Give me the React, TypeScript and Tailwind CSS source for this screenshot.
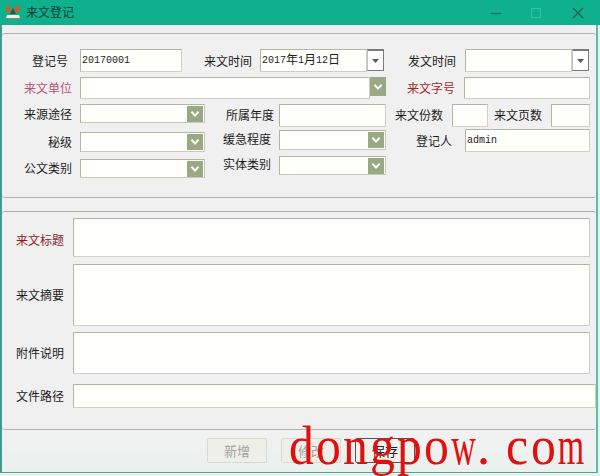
import React from "react";

const cjk = { fontFamily: '"Noto Sans CJK SC", "Liberation Sans", sans-serif' };
const mono = { fontFamily: '"Liberation Mono", "Noto Sans CJK SC", monospace' };

function Label({ text, w, h, color = "text-[#1c1c1c]", className = "" }: { text: string; w: string; h?: string; color?: string; className?: string }) {
  return (
    <div style={cjk} className={`${w} ${h ?? ""} ${color} ${className} shrink-0 flex items-center justify-end text-[12px] leading-none`}>
      {text}
    </div>
  );
}

function Input({ className = "", children }: { className?: string; children?: React.ReactNode }) {
  return (
    <div style={mono} className={`${className} shrink-0 bg-[#fffffb] border border-[#cfcfc2] border-t-[#b4b4a4] border-l-[#b4b4a4] rounded-[1px] flex items-center pl-[1px] text-[10px] text-[#1c1c1c] leading-none whitespace-nowrap`}>
      {children}
    </div>
  );
}

function Combo({ className = "" }: { className?: string }) {
  return (
    <div className={`${className} shrink-0 bg-[#fffffb] border border-[#c9c9bb] border-t-[#b4b4a4] border-l-[#b4b4a4] flex justify-end items-center pr-[1px]`}>
      <Chevron className="w-[16px] h-[16px]" />
    </div>
  );
}

function Chevron({ className = "" }: { className?: string }) {
  return (
    <div className={`${className} bg-[#9aa983] flex items-center justify-center shrink-0`}>
      <svg width="10" height="8" viewBox="0 0 10 8">
        <path d="M1.5 1.8 L5 5.6 L8.5 1.8" fill="none" stroke="#ffffff" strokeWidth="2" />
      </svg>
    </div>
  );
}

function DropBtn() {
  return (
    <div className="w-[17px] h-[22px] shrink-0 bg-white border-t-2 border-r border-b border-[#7a7a7a] border-l border-l-[#c0c0c0] flex items-center justify-center">
      <svg width="7" height="4" viewBox="0 0 7 4">
        <path d="M0 0 H7 L3.5 4 Z" fill="#5a5a5a" />
      </svg>
    </div>
  );
}

function Button({ text, active = false }: { text: string; active?: boolean }) {
  return (
    <div
      style={cjk}
      className={`w-[60px] h-[25px] rounded-[2px] flex items-center justify-center text-[13px] leading-none border ${
        active ? "border-[#555555] bg-[#f3f1ec] text-[#222222]" : "border-[#d9d9d2] bg-[#efefe9] text-[#a3a39c]"
      }`}
    >
      {text}
    </div>
  );
}

function Glyph({ c, wide = false }: { c: string; wide?: boolean }) {
  return (
    <span className="w-[27px] flex justify-center">
      <span className={wide ? "inline-block scale-x-[0.63]" : "inline-block scale-x-[0.92]"}>{c}</span>
    </span>
  );
}

export default function App() {
  return (
    <div className="relative w-[600px] h-[476px] bg-[#e6f3ef] overflow-hidden flex flex-col">
      <div className="h-[25px] shrink-0 flex items-center bg-[#0fb08e]">
        <svg width="16" height="16" viewBox="0 0 16 16" className="ml-[5px]">
          <rect x="1" y="1" width="5" height="6" fill="#b5683a" />
          <rect x="10" y="1" width="5" height="6" fill="#b5683a" />
          <path d="M8 3 L5 9 H11 Z" fill="#3d4f3d" />
          <path d="M2 10 H14 L15 13 H1 Z" fill="#f2efe0" />
          <rect x="1" y="13" width="14" height="1.5" fill="#6f8f7a" />
        </svg>
        <span style={cjk} className="ml-[5px] mb-[1px] text-[12px] leading-none text-[#0d3f36]">来文登记</span>
        <div className="ml-auto flex items-center">
          <svg width="12" height="12" viewBox="0 0 12 12" className="mr-[29px]">
            <path d="M1 6.5 H11" stroke="#2d6f60" strokeWidth="1.4" />
          </svg>
          <svg width="10" height="10" viewBox="0 0 10 10" className="mr-[31px]">
            <rect x="0.5" y="0.5" width="9" height="9" fill="none" stroke="#35bfa3" />
          </svg>
          <svg width="12" height="12" viewBox="0 0 12 12" className="mr-[16px]">
            <path d="M1 1 L11 11 M11 1 L1 11" stroke="#1f5f52" strokeWidth="1.4" />
          </svg>
        </div>
      </div>

      <div className="w-[598px] h-[448px] shrink-0 flex flex-col bg-[#f0f0f0] border-l-2 border-r-2 border-b border-l-[#3f9d8a] border-r-[#5fbcaa] border-b-[#5f9d90]">
        <div className="h-[8px] shrink-0" />
        <div className="h-[165px] shrink-0 border-t border-b border-[#b0b0ac] rounded-[3px] pt-[15px] pl-[1px]">
          <div className="flex h-[23px] items-start">
            <Label text="登记号" w="w-[65px]" h="h-[23px]" />
            <Input className="ml-[12px] w-[102px] h-[23px]">20170001</Input>
            <Label text="来文时间" w="w-[70px]" h="h-[23px]" />
            <Input className="ml-[8px] w-[107px] h-[23px]">
              2017<span className="text-[12px]">年</span>1<span className="text-[12px]">月</span>12<span className="text-[12px]">日</span>
            </Input>
            <DropBtn />
            <Label text="发文时间" w="w-[72px]" h="h-[23px]" />
            <Input className="ml-[9px] w-[107px] h-[23px]" />
            <DropBtn />
          </div>
          <div className="flex h-[22px] mt-[5px] items-start">
            <Label text="来文单位" w="w-[69px]" h="h-[22px]" color="text-[#b8527a]" />
            <Input className="ml-[8px] w-[290px] h-[22px]" />
            <Chevron className="w-[16px] h-[19px]" />
            <Label text="来文字号" w="w-[69px]" h="h-[22px]" color="text-[#a52a2a]" />
            <Input className="ml-[9px] w-[126px] h-[22px]" />
          </div>
          <div className="flex mt-[5px]">
            <div className="w-[202px] shrink-0 flex flex-col">
              <div className="flex h-[19px]">
                <Label text="来源途径" w="w-[69px]" />
                <Combo className="ml-[8px] w-[125px]" />
              </div>
              <div className="flex h-[20px] mt-[9px]">
                <Label text="秘级" w="w-[69px]" />
                <Combo className="ml-[8px] w-[125px]" />
              </div>
              <div className="flex h-[19px] mt-[7px]">
                <Label text="公文类别" w="w-[69px]" className="pb-[1px]" />
                <Combo className="ml-[8px] w-[125px]" />
              </div>
            </div>
            <div className="w-[181px] shrink-0 flex flex-col">
              <div className="flex h-[23px]">
                <Label text="所属年度" w="w-[69px]" className="pb-[2px]" />
                <Input className="ml-[5px] w-[107px]" />
              </div>
              <div className="flex h-[20px] mt-[3px]">
                <Label text="缓急程度" w="w-[66px]" className="pb-[2px]" />
                <Combo className="ml-[8px] w-[107px]" />
              </div>
              <div className="flex h-[19px] mt-[6px]">
                <Label text="实体类别" w="w-[66px]" className="pb-[3px]" />
                <Combo className="ml-[8px] w-[107px]" />
              </div>
            </div>
            <div className="flex flex-col">
              <div className="flex h-[23px]">
                <Label text="来文份数" w="w-[57px]" className="pb-[2px]" />
                <Input className="ml-[9px] w-[36px]" />
                <Label text="来文页数" w="w-[54px]" className="pb-[2px]" />
                <Input className="ml-[9px] w-[39px]" />
              </div>
              <div className="flex h-[23px] mt-[2px]">
                <Label text="登记人" w="w-[66px]" />
                <Input className="ml-[13px] w-[125px]">admin</Input>
              </div>
            </div>
          </div>
        </div>

        <div className="h-[13px] shrink-0" />
        <div className="h-[219px] shrink-0 border-t border-b border-[#b0b0ac] rounded-[3px] pt-[6px] pl-[1px] flex flex-col">
          <div className="flex h-[39px]">
            <Label text="来文标题" w="w-[61px]" color="text-[#8c1c1c]" className="pt-[5px]" />
            <Input className="ml-[9px] w-[517px]" />
          </div>
          <div className="flex h-[62px] mt-[7px]">
            <Label text="来文摘要" w="w-[61px]" />
            <Input className="ml-[9px] w-[517px]" />
          </div>
          <div className="flex h-[42px] mt-[6px]">
            <Label text="附件说明" w="w-[61px]" />
            <Input className="ml-[9px] w-[517px]" />
          </div>
          <div className="flex h-[24px] mt-[10px]">
            <Label text="文件路径" w="w-[61px]" />
            <Input className="ml-[9px] w-[523px]" />
          </div>
        </div>

        <div className="flex-1 flex pl-[205px] pt-[8px] gap-[14px] bg-gradient-to-b from-[#f1f1f0] to-[#e9f1ee]">
          <Button text="新增" />
          <Button text="修改" />
          <Button text="保存" active />
        </div>
      </div>

      <div
        style={{ fontFamily: '"Liberation Serif", serif' }}
        className="absolute left-[288px] top-[416px] flex text-[54px] leading-[60px] text-[#e01010] whitespace-pre"
      >
        <Glyph c="d" />
        <Glyph c="o" />
        <Glyph c="n" />
        <Glyph c="g" />
        <Glyph c="p" />
        <Glyph c="o" />
        <Glyph c="w" wide />
        <span className="w-[13px] flex justify-center">.</span>
        <span className="w-[13px]"> </span>
        <Glyph c="c" />
        <Glyph c="o" />
        <Glyph c="m" wide />
      </div>
    </div>
  );
}
